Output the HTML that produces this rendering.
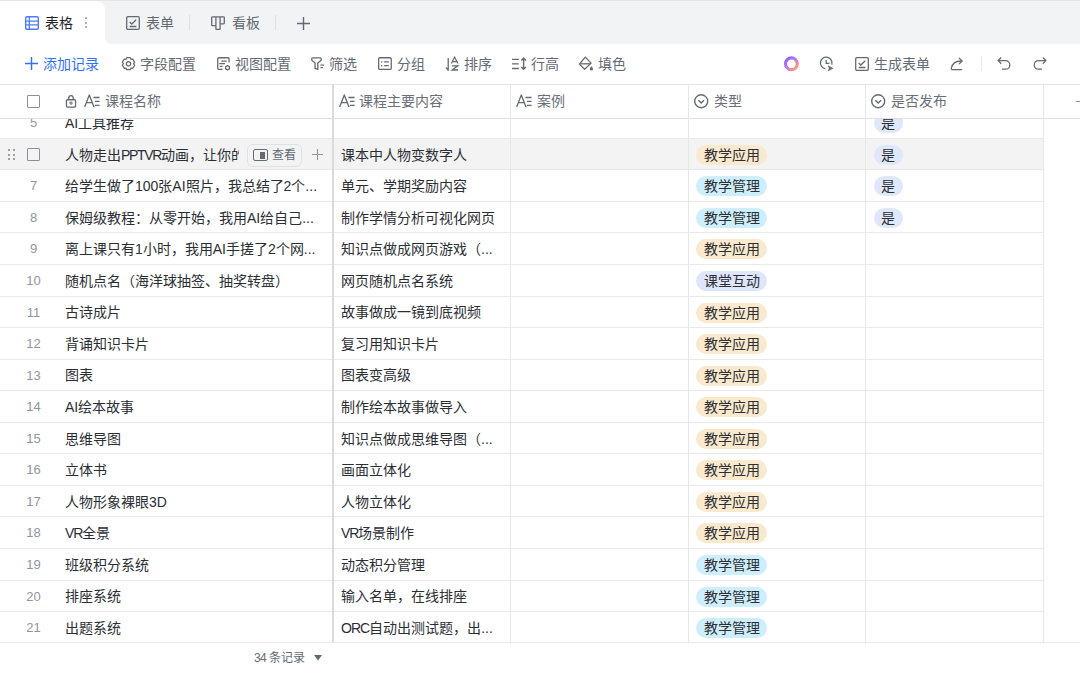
<!DOCTYPE html><html lang="zh-CN"><head><meta charset="utf-8"><style>
*{box-sizing:border-box;margin:0;padding:0}
html,body{width:1080px;height:675px;overflow:hidden;background:#fff;font-family:"Liberation Sans",sans-serif;color:#1f2329}
.a{position:absolute;white-space:nowrap}
.ic{position:absolute;display:block}
.tabbar{position:absolute;left:0;top:0;width:1080px;height:44px;background:#f2f3f5;border-top:1px solid #e4e5e7}
.tab-act{position:absolute;left:0;top:1px;width:105px;height:43px;background:#fff;border-top-right-radius:9px}
.tabcorner{position:absolute;left:105px;top:38px;width:6px;height:6px;background:#fff}
.tabcorner:after{content:"";position:absolute;left:0;top:0;width:6px;height:6px;background:#f2f3f5;border-bottom-left-radius:6px}
.t14{font-size:14px;line-height:16px}
.sep{position:absolute;width:1px;background:#dee0e3}
.hline{position:absolute;height:1px;background:#dee0e3}
.vline{position:absolute;width:1px;background:#e6e7e9}
.row{position:absolute;left:0;width:1043px;height:31.5px;border-bottom:1px solid #e8e9eb}
.num{position:absolute;left:18px;width:31px;text-align:center;font-size:13px;color:#8f959e}
.cell{position:absolute;font-size:14px;color:#2b2f35;white-space:nowrap;overflow:hidden}
.tag{position:absolute;height:20px;line-height:20px;border-radius:10px;font-size:14px;padding:0 7.5px;color:#2b2f35}
.t-or{background:#fae9cc}
.t-bl{background:#cfeefb}
.t-pu{background:#dfe6fc}
.t-yes{background:#dfe7fb}
.hd{font-size:14px;color:#6a6f78}
</style></head><body><div class="tabbar"></div><div class="tab-act"></div><div class="tabcorner"></div>
<svg class="ic" style="left:25px;top:15.6px" width="14" height="14" viewBox="0 0 14 14"><rect x="0.7" y="0.7" width="12.6" height="12.6" rx="1.3" stroke="#4a7cfc" stroke-width="1.4" fill="none"/><path d="M4.3 1v12M4.3 5.1h8.7M4.3 8.9h8.7M1 5.1h3.3M1 8.9h3.3" stroke="#4a7cfc" stroke-width="1.3"/></svg>
<div class="a t14" style="left:45px;top:14.6px;color:#1f2329">表格</div>
<div class="a" style="left:85px;top:16.8px;width:2px;height:2px;border-radius:1px;background:#8f959e"></div><div class="a" style="left:85px;top:21.6px;width:2px;height:2px;border-radius:1px;background:#8f959e"></div><div class="a" style="left:85px;top:26.4px;width:2px;height:2px;border-radius:1px;background:#8f959e"></div>
<svg class="ic" style="left:126px;top:15.6px" width="14" height="14" viewBox="0 0 14 14"><rect x="0.7" y="0.7" width="12.6" height="12.6" rx="1.2" stroke="#646a73" stroke-width="1.3" fill="none"/><path d="M3.6 6l2.2 2 4.4-4.2M3.6 10.5h6.8" stroke="#646a73" stroke-width="1.3" fill="none"/></svg>
<div class="a t14" style="left:146px;top:14.6px;color:#646a73">表单</div>
<div class="sep" style="left:189px;top:15px;height:15px"></div>
<svg class="ic" style="left:211px;top:15.6px" width="14" height="14" viewBox="0 0 14 14"><path d="M1.5 0.8h11a.8 .8 0 0 1 .8 .8v5.4a.8 .8 0 0 1-.8 .8H9.1v4.9a.8 .8 0 0 1-.8 .8H5.7a.8 .8 0 0 1-.8-.8V9.7H1.5a.8 .8 0 0 1-.8-.8V1.6a.8 .8 0 0 1 .8-.8z" stroke="#646a73" stroke-width="1.3" fill="none" stroke-linejoin="round"/><path d="M4.9 1v8.6M9.1 1v6.8" stroke="#646a73" stroke-width="1.3"/></svg>
<div class="a t14" style="left:232px;top:14.6px;color:#646a73">看板</div>
<div class="sep" style="left:275px;top:15px;height:15px"></div>
<svg class="ic" style="left:297px;top:16.6px" width="13" height="13" viewBox="0 0 13 13"><path d="M6.5 0v13M0 6.5h13" stroke="#646a73" stroke-width="1.4"/></svg>
<svg class="ic" style="left:25px;top:57px" width="13" height="13" viewBox="0 0 13 13"><path d="M6.5 0v13M0 6.5h13" stroke="#3370ff" stroke-width="1.4"/></svg>
<div class="a t14" style="left:43.3px;top:55.5px;color:#3370ff">添加记录</div>
<svg class="ic" style="left:116px;top:50px" width="24" height="24" viewBox="116 50 24 24"><path d="M126.66 57.68 L130.34 57.68 L131.00 59.37 L132.80 59.09 L134.64 62.28 L133.50 63.70 L134.64 65.12 L132.80 68.31 L131.00 68.03 L130.34 69.72 L126.66 69.72 L126.00 68.03 L124.20 68.31 L122.36 65.12 L123.50 63.70 L122.36 62.28 L124.20 59.09 L126.00 59.37z" stroke="#646a73" stroke-width="1.25" fill="none" stroke-linejoin="round"/><circle cx="128.5" cy="63.7" r="2.15" stroke="#646a73" stroke-width="1.25" fill="none"/></svg>
<div class="a t14" style="left:140px;top:55.5px;color:#646a73">字段配置</div>
<svg class="ic" style="left:211px;top:50px" width="24" height="24" viewBox="211 50 24 24"><path d="M222.6 69.35H218.75a1 1 0 0 1-1-1V58.75a1 1 0 0 1 1-1H228.05a1 1 0 0 1 1 1V62.6" stroke="#646a73" stroke-width="1.3" fill="none"/><path d="M221.4 61.1h5.3M219.3 63.6h5.7M219.8 66.3h2.8" stroke="#646a73" stroke-width="1.3"/><path d="M227.5 65.6l1.9 1.1v2.2l-1.9 1.1-1.9-1.1v-2.2z" stroke="#646a73" stroke-width="1.3" fill="none" stroke-linejoin="round"/></svg>
<div class="a t14" style="left:235px;top:55.5px;color:#646a73">视图配置</div>
<svg class="ic" style="left:305px;top:50px" width="24" height="24" viewBox="305 50 24 24"><path d="M312.6 57.95H320.3a.9 .9 0 0 1 .9 .9V60.2L317.85 62.9V69.4L315.05 68.4V62.9L311.75 60.2V58.85a.9 .9 0 0 1 .9-.9z" stroke="#646a73" stroke-width="1.3" fill="none" stroke-linejoin="round"/><path d="M320.4 65.1h3.7M320.4 67.6h2.5" stroke="#646a73" stroke-width="1.25"/></svg>
<div class="a t14" style="left:329px;top:55.5px;color:#646a73">筛选</div>
<svg class="ic" style="left:372px;top:50px" width="24" height="24" viewBox="372 50 24 24"><rect x="378.65" y="57.75" width="12.6" height="11.7" rx="1.3" stroke="#646a73" stroke-width="1.3" fill="none"/><path d="M381.6 61.9h.1M381.6 65.7h.1" stroke="#646a73" stroke-width="1.5" stroke-linecap="round"/><path d="M384.1 61.9h4.7M384.1 65.7h4.7" stroke="#646a73" stroke-width="1.3"/></svg>
<div class="a t14" style="left:397px;top:55.5px;color:#646a73">分组</div>
<svg class="ic" style="left:439px;top:50px" width="24" height="24" viewBox="439 50 24 24"><path d="M448.2 57.9V70.3L445.9 67.3" stroke="#646a73" stroke-width="1.3" fill="none" stroke-linejoin="round"/><path d="M451.4 63.6L454.6 57.1L457.9 63.6M452.5 61.6h4.3" stroke="#646a73" stroke-width="1.2" fill="none"/><path d="M452 65.9H457.8L452.1 70H458" stroke="#646a73" stroke-width="1.3" fill="none"/></svg>
<div class="a t14" style="left:464px;top:55.5px;color:#646a73">排序</div>
<svg class="ic" style="left:506px;top:50px" width="24" height="24" viewBox="506 50 24 24"><path d="M512 59.3h6.8M512 63.8h6.8M512 68.5h6.8" stroke="#646a73" stroke-width="1.3"/><path d="M523.6 58.2V69.2M521.3 60.4L523.6 58.1L525.9 60.4M521.3 67L523.6 69.3L525.9 67" stroke="#646a73" stroke-width="1.4" fill="none"/></svg>
<div class="a t14" style="left:531px;top:55.5px;color:#646a73">行高</div>
<svg class="ic" style="left:573px;top:50px" width="24" height="24" viewBox="573 50 24 24"><path d="M585.3 57.1L591.1 63.1L584.6 69.2L579.4 64.1z" stroke="#646a73" stroke-width="1.3" fill="none" stroke-linejoin="round"/><path d="M580 63.8h10.5" stroke="#646a73" stroke-width="1.3"/><path d="M591.4 66.2c1 1.2 1.6 2 1.6 2.8a1.6 1.6 0 0 1-3.2 0c0-.8.6-1.6 1.6-2.8z" fill="#646a73"/></svg>
<div class="a t14" style="left:598px;top:55.5px;color:#646a73">填色</div>
<div class="a t14" style="left:874px;top:55.5px;color:#646a73">生成表单</div>
<svg class="ic" style="left:780px;top:52px;filter:blur(0.35px)" width="24" height="24" viewBox="780 52 24 24"><defs><linearGradient id="gr" x1="0" y1="0" x2="1" y2="1"><stop offset="0" stop-color="#8a5cff"/><stop offset="0.45" stop-color="#b87cf5"/><stop offset="0.75" stop-color="#f28aa0"/><stop offset="1" stop-color="#ffa45c"/></linearGradient></defs><circle cx="791.4" cy="63.8" r="5.9" stroke="url(#gr)" stroke-width="3.1" fill="none"/></svg>
<svg class="ic" style="left:814px;top:50px" width="24" height="24" viewBox="814 50 24 24"><path d="M825.49 68.66A5.8 5.8 0 1 1 831.72 64.69" stroke="#646a73" stroke-width="1.3" fill="none"/><path d="M826.2 60.1V63.4H829.4" stroke="#646a73" stroke-width="1.3" fill="none"/><path d="M833 68.3L828 65.7L829.3 68.3L828 71z" fill="#646a73" stroke="#646a73" stroke-width="0.6" stroke-linejoin="round"/></svg>
<svg class="ic" style="left:855px;top:57px" width="14" height="14" viewBox="0 0 14 14"><rect x="0.7" y="0.7" width="12.6" height="12.6" rx="1.2" stroke="#646a73" stroke-width="1.3" fill="none"/><path d="M3.6 6l2.2 2 4.4-4.2M3.6 10.5h6.8" stroke="#646a73" stroke-width="1.3" fill="none"/></svg>
<svg class="ic" style="left:950px;top:56.3px" width="15" height="15" viewBox="0 0 15 15"><path d="M11.6 13.6H2.3a1 1 0 0 1-1-1.1C2 8 5.2 5 11.2 5" stroke="#646a73" stroke-width="1.3" fill="none" stroke-linecap="round"/><path d="M9.2 2.1l3 2.9-3 2.9" stroke="#646a73" stroke-width="1.3" fill="none" stroke-linecap="round" stroke-linejoin="round"/></svg>
<div class="sep" style="left:981px;top:56px;height:15px;background:#e6e7e9"></div>
<svg class="ic" style="left:997px;top:56.4px" width="15" height="15" viewBox="0 0 15 15"><path d="M4.2 1.5L1.2 4.6l3 3.1" stroke="#646a73" stroke-width="1.3" fill="none"/><path d="M1.5 4.6h7a4.3 4.3 0 0 1 0 8.6H5" stroke="#646a73" stroke-width="1.3" fill="none"/></svg>
<svg class="ic" style="left:1032px;top:56.4px" width="15" height="15" viewBox="0 0 15 15"><path d="M10.8 1.5l3 3.1-3 3.1" stroke="#646a73" stroke-width="1.3" fill="none"/><path d="M13.5 4.6h-7a4.3 4.3 0 0 0 0 8.6H10" stroke="#646a73" stroke-width="1.3" fill="none"/></svg>
<div class="a" style="left:0;top:119px;width:1080px;height:523px;overflow:hidden"><div class="a" style="left:0;top:-11.75px;width:1043px;height:31px"><div class="a num" style="top:8px">5</div><div class="cell" style="left:65px;top:4.8px">AI工具推荐</div><div class="tag t-yes" style="left:873.5px;top:6px;padding:0 7.5px">是</div></div><div class="a" style="left:0;top:19.80px;width:1043px;height:31px"><div class="a" style="left:0;top:0.20px;width:1043px;height:30px;background:#f3f3f4"></div><div class="a" style="left:8.3px;top:9.9px;width:2.1px;height:2.1px;border-radius:1.05px;background:#80858e"></div><div class="a" style="left:8.3px;top:14.8px;width:2.1px;height:2.1px;border-radius:1.05px;background:#80858e"></div><div class="a" style="left:8.3px;top:19.4px;width:2.1px;height:2.1px;border-radius:1.05px;background:#80858e"></div><div class="a" style="left:12.7px;top:9.9px;width:2.1px;height:2.1px;border-radius:1.05px;background:#80858e"></div><div class="a" style="left:12.7px;top:14.8px;width:2.1px;height:2.1px;border-radius:1.05px;background:#80858e"></div><div class="a" style="left:12.7px;top:19.4px;width:2.1px;height:2.1px;border-radius:1.05px;background:#80858e"></div><div class="a" style="left:27px;top:9px;width:13.2px;height:13.2px;border:1.5px solid #8a8f98;border-radius:1px"></div><div class="cell" style="left:65px;top:4.8px;width:174px">人物走出<span style="letter-spacing:-1.3px">PPTVR</span>动画，让你的课本</div><div class="a" style="left:247px;top:5px;width:55px;height:23px;border:1px solid #e0e1e3;border-radius:6px;background:#f3f3f4"></div><div class="a" style="left:253px;top:10.5px;width:15px;height:12px;border:1.3px solid #646a73;border-radius:2px"></div><div class="a" style="left:259.5px;top:13px;width:5.5px;height:7px;background:#646a73"></div><div class="a" style="left:272px;top:8px;font-size:12px;line-height:16px;color:#646a73">查看</div><svg class="ic" style="left:312px;top:10px" width="11" height="11" viewBox="0 0 11 11"><path d="M5.5 0v11M0 5.5h11" stroke="#8f959e" stroke-width="1.1"/></svg><div class="cell" style="left:341px;top:4.8px">课本中人物变数字人</div><div class="tag t-or" style="left:696px;top:6px">教学应用</div><div class="tag t-yes" style="left:873.5px;top:6px;padding:0 7.5px">是</div></div><div class="a" style="left:0;top:51.35px;width:1043px;height:31px"><div class="a num" style="top:8px">7</div><div class="cell" style="left:65px;top:4.8px">给学生做了100张AI照片，我总结了2个...</div><div class="cell" style="left:341px;top:4.8px">单元、学期奖励内容</div><div class="tag t-bl" style="left:696px;top:6px">教学管理</div><div class="tag t-yes" style="left:873.5px;top:6px;padding:0 7.5px">是</div></div><div class="a" style="left:0;top:82.90px;width:1043px;height:31px"><div class="a num" style="top:8px">8</div><div class="cell" style="left:65px;top:4.8px">保姆级教程：从零开始，我用AI给自己...</div><div class="cell" style="left:341px;top:4.8px">制作学情分析可视化网页</div><div class="tag t-bl" style="left:696px;top:6px">教学管理</div><div class="tag t-yes" style="left:873.5px;top:6px;padding:0 7.5px">是</div></div><div class="a" style="left:0;top:114.45px;width:1043px;height:31px"><div class="a num" style="top:8px">9</div><div class="cell" style="left:65px;top:4.8px">离上课只有1小时，我用AI手搓了2个网...</div><div class="cell" style="left:341px;top:4.8px">知识点做成网页游戏（...</div><div class="tag t-or" style="left:696px;top:6px">教学应用</div></div><div class="a" style="left:0;top:146.00px;width:1043px;height:31px"><div class="a num" style="top:8px">10</div><div class="cell" style="left:65px;top:4.8px">随机点名（海洋球抽签、抽奖转盘）</div><div class="cell" style="left:341px;top:4.8px">网页随机点名系统</div><div class="tag t-pu" style="left:696px;top:6px">课堂互动</div></div><div class="a" style="left:0;top:177.55px;width:1043px;height:31px"><div class="a num" style="top:8px">11</div><div class="cell" style="left:65px;top:4.8px">古诗成片</div><div class="cell" style="left:341px;top:4.8px">故事做成一镜到底视频</div><div class="tag t-or" style="left:696px;top:6px">教学应用</div></div><div class="a" style="left:0;top:209.10px;width:1043px;height:31px"><div class="a num" style="top:8px">12</div><div class="cell" style="left:65px;top:4.8px">背诵知识卡片</div><div class="cell" style="left:341px;top:4.8px">复习用知识卡片</div><div class="tag t-or" style="left:696px;top:6px">教学应用</div></div><div class="a" style="left:0;top:240.65px;width:1043px;height:31px"><div class="a num" style="top:8px">13</div><div class="cell" style="left:65px;top:4.8px">图表</div><div class="cell" style="left:341px;top:4.8px">图表变高级</div><div class="tag t-or" style="left:696px;top:6px">教学应用</div></div><div class="a" style="left:0;top:272.20px;width:1043px;height:31px"><div class="a num" style="top:8px">14</div><div class="cell" style="left:65px;top:4.8px">AI绘本故事</div><div class="cell" style="left:341px;top:4.8px">制作绘本故事做导入</div><div class="tag t-or" style="left:696px;top:6px">教学应用</div></div><div class="a" style="left:0;top:303.75px;width:1043px;height:31px"><div class="a num" style="top:8px">15</div><div class="cell" style="left:65px;top:4.8px">思维导图</div><div class="cell" style="left:341px;top:4.8px">知识点做成思维导图（...</div><div class="tag t-or" style="left:696px;top:6px">教学应用</div></div><div class="a" style="left:0;top:335.30px;width:1043px;height:31px"><div class="a num" style="top:8px">16</div><div class="cell" style="left:65px;top:4.8px">立体书</div><div class="cell" style="left:341px;top:4.8px">画面立体化</div><div class="tag t-or" style="left:696px;top:6px">教学应用</div></div><div class="a" style="left:0;top:366.85px;width:1043px;height:31px"><div class="a num" style="top:8px">17</div><div class="cell" style="left:65px;top:4.8px">人物形象裸眼3D</div><div class="cell" style="left:341px;top:4.8px">人物立体化</div><div class="tag t-or" style="left:696px;top:6px">教学应用</div></div><div class="a" style="left:0;top:398.40px;width:1043px;height:31px"><div class="a num" style="top:8px">18</div><div class="cell" style="left:65px;top:4.8px"><span style="letter-spacing:-1.0px">VR</span>全景</div><div class="cell" style="left:341px;top:4.8px"><span style="letter-spacing:-1.0px">VR</span>场景制作</div><div class="tag t-or" style="left:696px;top:6px">教学应用</div></div><div class="a" style="left:0;top:429.95px;width:1043px;height:31px"><div class="a num" style="top:8px">19</div><div class="cell" style="left:65px;top:4.8px">班级积分系统</div><div class="cell" style="left:341px;top:4.8px">动态积分管理</div><div class="tag t-bl" style="left:696px;top:6px">教学管理</div></div><div class="a" style="left:0;top:461.50px;width:1043px;height:31px"><div class="a num" style="top:8px">20</div><div class="cell" style="left:65px;top:4.8px">排座系统</div><div class="cell" style="left:341px;top:4.8px">输入名单，在线排座</div><div class="tag t-bl" style="left:696px;top:6px">教学管理</div></div><div class="a" style="left:0;top:493.05px;width:1043px;height:31px"><div class="a num" style="top:8px">21</div><div class="cell" style="left:65px;top:4.8px">出题系统</div><div class="cell" style="left:341px;top:4.8px"><span style="letter-spacing:-1.0px">ORC</span>自动出测试题，出...</div><div class="tag t-bl" style="left:696px;top:6px">教学管理</div></div><div class="hline" style="left:0;top:19px;width:1043px;background:#e8e9eb"></div><div class="hline" style="left:0;top:50px;width:1043px;background:#e8e9eb"></div><div class="hline" style="left:0;top:82px;width:1043px;background:#e8e9eb"></div><div class="hline" style="left:0;top:113px;width:1043px;background:#e8e9eb"></div><div class="hline" style="left:0;top:145px;width:1043px;background:#e8e9eb"></div><div class="hline" style="left:0;top:177px;width:1043px;background:#e8e9eb"></div><div class="hline" style="left:0;top:208px;width:1043px;background:#e8e9eb"></div><div class="hline" style="left:0;top:240px;width:1043px;background:#e8e9eb"></div><div class="hline" style="left:0;top:271px;width:1043px;background:#e8e9eb"></div><div class="hline" style="left:0;top:303px;width:1043px;background:#e8e9eb"></div><div class="hline" style="left:0;top:334px;width:1043px;background:#e8e9eb"></div><div class="hline" style="left:0;top:366px;width:1043px;background:#e8e9eb"></div><div class="hline" style="left:0;top:397px;width:1043px;background:#e8e9eb"></div><div class="hline" style="left:0;top:429px;width:1043px;background:#e8e9eb"></div><div class="hline" style="left:0;top:461px;width:1043px;background:#e8e9eb"></div><div class="hline" style="left:0;top:492px;width:1043px;background:#e8e9eb"></div><div class="vline" style="left:510px;top:0;height:523px"></div><div class="vline" style="left:688px;top:0;height:523px"></div><div class="vline" style="left:865px;top:0;height:523px"></div><div class="vline" style="left:1043px;top:0;height:523px"></div><div class="a" style="left:332px;top:0;width:2px;height:523px;background:#d9dbde"></div></div>
<div class="hline" style="left:0;top:642px;width:1080px;background:#e8e9eb"></div>
<div class="a" style="left:0;top:83.6px;width:1080px;height:35.4px;background:#fff;border-top:1px solid #e4e5e7;border-bottom:1px solid #dee0e3"></div><div class="a" style="left:27px;top:94.5px;width:13.3px;height:13.3px;border:1.5px solid #8a8f98;border-radius:1px"></div><svg class="ic" style="left:64.5px;top:94px" width="12" height="14" viewBox="0 0 12 14"><rect x="1.45" y="5.75" width="9.1" height="7.3" rx="1" stroke="#646a73" stroke-width="1.3" fill="none"/><path d="M3.75 5.75V3.9a2.25 2.25 0 0 1 4.5 0V5.75" stroke="#646a73" stroke-width="1.3" fill="none"/><circle cx="6" cy="9.1" r="1.1" stroke="#646a73" stroke-width="1.1" fill="none"/></svg><svg class="ic" style="left:84px;top:94px" width="16" height="14" viewBox="0 0 16 14"><path d="M0.6 13.1L5.3 0.9L10 13.1M2.3 8.6h6" stroke="#646a73" stroke-width="1.3" fill="none" stroke-linejoin="round"/><path d="M9.4 3.5h6.2M10.9 7.4h4.7M10.9 11.4h4.7" stroke="#646a73" stroke-width="1.3" fill="none"/></svg><div class="a hd" style="left:105px;top:93.3px;line-height:16px">课程名称</div><svg class="ic" style="left:338.5px;top:94px" width="16" height="14" viewBox="0 0 16 14"><path d="M0.6 13.1L5.3 0.9L10 13.1M2.3 8.6h6" stroke="#646a73" stroke-width="1.3" fill="none" stroke-linejoin="round"/><path d="M9.4 3.5h6.2M10.9 7.4h4.7M10.9 11.4h4.7" stroke="#646a73" stroke-width="1.3" fill="none"/></svg><div class="a hd" style="left:359px;top:93.3px;line-height:16px">课程主要内容</div><svg class="ic" style="left:516px;top:94px" width="16" height="14" viewBox="0 0 16 14"><path d="M0.6 13.1L5.3 0.9L10 13.1M2.3 8.6h6" stroke="#646a73" stroke-width="1.3" fill="none" stroke-linejoin="round"/><path d="M9.4 3.5h6.2M10.9 7.4h4.7M10.9 11.4h4.7" stroke="#646a73" stroke-width="1.3" fill="none"/></svg><div class="a hd" style="left:537px;top:93.3px;line-height:16px">案例</div><svg class="ic" style="left:694px;top:94px" width="15" height="15" viewBox="0 0 15 15"><circle cx="7.2" cy="7.2" r="6.5" stroke="#646a73" stroke-width="1.35" fill="none"/><path d="M4.4 6.2l2.8 2.8 2.8-2.8" stroke="#646a73" stroke-width="1.45" fill="none"/></svg><div class="a hd" style="left:714px;top:93.3px;line-height:16px">类型</div><svg class="ic" style="left:871px;top:94px" width="15" height="15" viewBox="0 0 15 15"><circle cx="7.2" cy="7.2" r="6.5" stroke="#646a73" stroke-width="1.35" fill="none"/><path d="M4.4 6.2l2.8 2.8 2.8-2.8" stroke="#646a73" stroke-width="1.45" fill="none"/></svg><div class="a hd" style="left:891px;top:93.3px;line-height:16px">是否发布</div><div class="vline" style="left:510px;top:84px;height:34.5px"></div><div class="vline" style="left:688px;top:84px;height:34.5px"></div><div class="vline" style="left:865px;top:84px;height:34.5px"></div><div class="vline" style="left:1043px;top:84px;height:34.5px"></div><div class="a" style="left:332px;top:84px;width:2px;height:35px;background:#d9dbde"></div><div class="a" style="left:1076px;top:100.8px;width:5px;height:1.2px;background:#8a8f98"></div>
<div class="a" style="left:254px;top:650.2px;font-size:12px;line-height:16px;color:#646a73"><span style="letter-spacing:-0.6px">34</span> 条记录</div>
<svg class="ic" style="left:313.5px;top:654.5px" width="8" height="6" viewBox="0 0 8 6"><path d="M0 0h8L4 5.5z" fill="#646a73"/></svg></body></html>
